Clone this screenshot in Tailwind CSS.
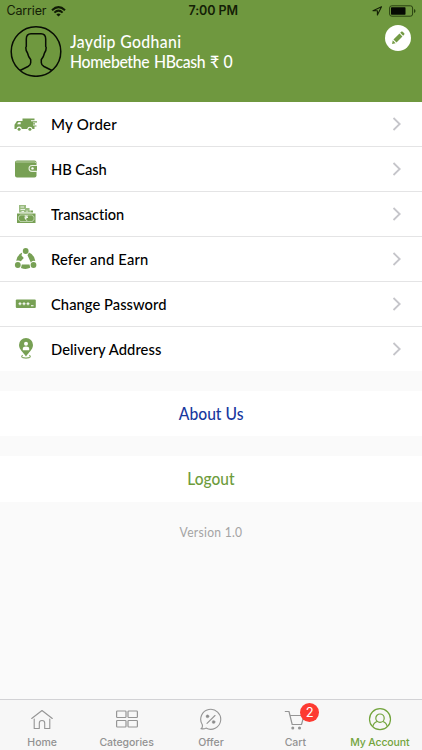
<!DOCTYPE html>
<html lang="en">
<head>
<meta charset="utf-8">
<title>My Account</title>
<script src="https://cdn.jsdelivr.net/npm/@tailwindcss/browser@4"></script>
</head>
<body class="w-[422px] h-[750px] overflow-hidden bg-[#fafafa] font-['Lato',sans-serif] flex flex-col">
<header class="h-[102px] shrink-0 bg-[#6f983f] flex flex-col">
  <div class="h-[22px] grid grid-cols-3 items-center pl-[6.5px] pr-[6px] font-['Inter',sans-serif] text-[12.5px] text-[#142006]">
    <div class="flex items-center gap-[5px]"><span class="tracking-[-0.15px]">Carrier</span>
      <svg width="15" height="11" viewBox="0 0 15 11" fill="none" stroke="#101b05" stroke-width="2"><path d="M1 4.200Q7.500-2 14 4.200M3.400 6.600Q7.500 2.700 11.600 6.600"/><path d="M5.300 8.400Q7.500 6.400 9.700 8.400L7.500 10.600Z" fill="#101b05" stroke="none"/></svg>
    </div>
    <div class="text-center font-semibold tracking-[-0.05px] pl-[4px]">7:00 PM</div>
    <div class="flex items-center justify-end gap-[6px]">
      <svg width="11" height="10" viewBox="0 0 11 10" fill="none" stroke="#142006" stroke-width="1.100" stroke-linejoin="round"><path d="M9.500 .8L1 4.700H5.400V9Z"/></svg>
      <svg width="27" height="12" viewBox="0 0 27 12"><rect x=".6" y=".8" width="23" height="10.400" rx="2.200" fill="none" stroke="#294010"/><rect x="2" y="2.300" width="14.500" height="7.400" rx=".6" fill="#050903"/><path d="M25 4v4q1.500-.6 1.500-2T25 4z" fill="#294010"/></svg>
    </div>
  </div>
  <div class="flex items-start pl-[10px] pr-[11px]">
    <svg class="mt-[3px]" width="52" height="52" viewBox="0 0 52 52" fill="none" stroke="#080d04" stroke-width="1.500" stroke-linejoin="round"><circle cx="26" cy="26.500" r="24.800"/><path d="M10 45.500L18 41.500Q20.700 40 20.700 37.800V34.600Q18.500 32.500 17.500 28Q15.700 25.500 15.800 22.500L16.300 21.500V14Q16.300 8.700 21 8.700H31Q35.700 8.700 35.700 14V21.500L36.200 22.500Q36.300 25.500 34.500 28Q33.500 32.500 31.300 34.600V37.800Q31.300 40 34 41.500L42 45.500"/></svg>
    <div class="ml-[7.5px] mt-[10px] flex-1 text-white text-[17px] leading-[20px] font-medium whitespace-nowrap">
      <div class="origin-left scale-x-[.93] tracking-[0.38px]">Jaydip Godhani</div>
      <div class="origin-left scale-x-[.93] tracking-[-0.38px] [word-spacing:1.2px]">Homebethe HBcash ₹ 0</div>
    </div>
    <div class="mt-[3px] size-[26px] rounded-full bg-white flex items-center justify-center">
      <svg width="14" height="14" viewBox="0 0 16 16" fill="#739b45"><path d="M1.200 14.800L2 10.700L5.300 14ZM2.800 9.700L9.700 2.900L13.100 6.300L6.300 13.200ZM10.500 2.100L12 .7Q12.700 .2 13.400 .9L15.100 2.600Q15.700 3.300 15.200 4L13.900 5.500Z"/></svg>
    </div>
  </div>
</header>

<main class="flex-1 min-h-0">
  <nav class="h-[269px] bg-white grid grid-rows-[45px_45px_45px_45px_45px_44px] divide-y divide-[#e4e4e5] text-[16px] font-medium text-black">
    <a class="flex items-center pl-[13px] pr-[19px]"><span class="w-[26px] mr-[12px]"><svg width="26" height="26" viewBox="0 0 26 26" fill="#77a054"><path d="M9.500 7.500H21.500V9.300H18V10.200H24V11.400H20V12.300H22V13.500H20V14.400H23.500V15.500H21.500V18H19.500A2.700 2.700 0 0 0 14.200 18H8.700A2.600 2.600 0 0 0 3.500 18H1.500V13.800L4 10H9.500Z"/><path d="M4 13.300L5.500 11.300H7.700V13.300Z" fill="#fff"/><circle cx="6.100" cy="18.300" r="1.500"/><circle cx="16.900" cy="18.300" r="1.500"/></svg></span><span class="flex-1 origin-left scale-x-[.94] tracking-[0.25px]">My Order</span><svg width="12" height="16" viewBox="0 0 12 16" fill="none" stroke="#c5c5ca" stroke-width="1.800"><path d="M2.500 2L8.700 8L2.500 14"/></svg></a>
    <a class="flex items-center pl-[13px] pr-[19px]"><span class="w-[26px] mr-[12px]"><svg width="26" height="26" viewBox="0 0 26 26" fill="#77a054"><rect x="2" y="4.500" width="21.500" height="17" rx="2"/><path d="M3 6H22.500V7" stroke="#c8dab8" stroke-width=".8" fill="none"/><path d="M24 9.500H19A2.900 2.900 0 0 0 19 15.400H24" stroke="#e7f0df" stroke-width="1.100"/><circle cx="19.500" cy="12.400" r="1.200" fill="#fff"/></svg></span><span class="flex-1 origin-left scale-x-[.92] tracking-[-0.1px]">HB Cash</span><svg width="12" height="16" viewBox="0 0 12 16" fill="none" stroke="#c5c5ca" stroke-width="1.800"><path d="M2.500 2L8.700 8L2.500 14"/></svg></a>
    <a class="flex items-center pl-[13px] pr-[19px]"><span class="w-[26px] mr-[12px]"><svg width="26" height="26" viewBox="0 0 26 26" fill="#77a054"><path d="M4 12.500H22.500V22H4Z"/><path d="M6 4H13V7H16.500V9.500H17.500V11.500H6Z" fill="#9abb80"/><path d="M7.500 6H11M7.500 8.500H12M14 9.500V11M8.500 10.500H11" stroke="#e9f1e3"/><path d="M17.500 9.500H20V11.500H17.500Z"/><path d="M7 14H19.500Q19.500 15.500 21 15.500V19Q19.500 19 19.500 20.500H7Q7 19 5.500 19V15.500Q7 15.500 7 14Z" fill="none" stroke="#c9dcba" stroke-width=".8"/><path d="M11.500 15H15M11.500 16.500H15M12 15Q14.500 15 14 16.500T12 17.500L14 19.800" fill="none" stroke="#fff" stroke-width=".8"/></svg></span><span class="flex-1 origin-left scale-x-[.91] tracking-[-0.05px]">Transaction</span><svg width="12" height="16" viewBox="0 0 12 16" fill="none" stroke="#c5c5ca" stroke-width="1.800"><path d="M2.500 2L8.700 8L2.500 14"/></svg></a>
    <a class="flex items-center pl-[13px] pr-[19px]"><span class="w-[26px] mr-[12px]"><svg width="26" height="26" viewBox="0 0 26 26" fill="#77a054"><circle cx="12.700" cy="5" r="2.900"/><circle cx="4.800" cy="19" r="2.900"/><circle cx="20.500" cy="19" r="2.900"/><path d="M9.200 6.500L8.500 9.500L10.800 12L7.800 15.200Q5.500 14 3.200 14.800Q3.700 9.500 9.200 6.500ZM16 6.500Q21.500 9 22.300 15Q19 14.300 17.800 16.400L14.500 9.300ZM8.800 18.500H16.500L17.200 21.800Q13 24 8 22Z"/></svg></span><span class="flex-1 origin-left scale-x-[.92] tracking-[0.18px]">Refer and Earn</span><svg width="12" height="16" viewBox="0 0 12 16" fill="none" stroke="#c5c5ca" stroke-width="1.800"><path d="M2.500 2L8.700 8L2.500 14"/></svg></a>
    <a class="flex items-center pl-[13px] pr-[19px]"><span class="w-[26px] mr-[12px]"><svg width="26" height="26" viewBox="0 0 26 26" fill="#77a054"><rect x="2.800" y="8.500" width="20" height="8.500" rx="1"/><path d="M5.500 12.700H8.500M7 11.200V14.200M9.500 12.700H12.500M11 11.200V14.200M13.500 12.700H16.500M15 11.200V14.200M18 14.700H20.500" stroke="#fff" stroke-width="1.100"/></svg></span><span class="flex-1 origin-left scale-x-[.92] tracking-[0.05px]">Change Password</span><svg width="12" height="16" viewBox="0 0 12 16" fill="none" stroke="#c5c5ca" stroke-width="1.800"><path d="M2.500 2L8.700 8L2.500 14"/></svg></a>
    <a class="flex items-center pl-[13px] pr-[19px]"><span class="w-[26px] mr-[12px]"><svg width="26" height="26" viewBox="0 0 26 26" fill="#77a054"><path d="M13 2A7 7 0 0 1 20 9C20 13.500 15.500 16.500 13 20.500C10.500 16.500 6 13.500 6 9A7 7 0 0 1 13 2Z"/><circle cx="13" cy="7.800" r="2" fill="#fff"/><path d="M9.800 14.300V12.700Q9.800 10.500 13 10.500T16.200 12.700V14.300Z" fill="#fff"/><path d="M9.700 19.300Q7.500 21 10 21.700Q13 22.500 16 21.700Q18.500 21 16.300 19.300" fill="none" stroke="#8aad6b" stroke-width="1.200"/></svg></span><span class="flex-1 origin-left scale-x-[.92] tracking-[0.08px]">Delivery Address</span><svg width="12" height="16" viewBox="0 0 12 16" fill="none" stroke="#c5c5ca" stroke-width="1.800"><path d="M2.500 2L8.700 8L2.500 14"/></svg></a>
  </nav>
  <button class="mt-[20px] h-[45px] w-full bg-white flex items-center justify-center text-[17px] font-medium text-[#17389e]"><span class="scale-x-[.92]">About Us</span></button>
  <button class="mt-[20px] h-[46px] w-full bg-white flex items-center justify-center text-[17px] font-medium text-[#6d9c3c]"><span class="scale-x-[.91]">Logout</span></button>
  <p class="mt-[20px] text-center text-[13px] leading-[20px] tracking-[0.3px] text-[#a4a4a4] scale-x-[.93]">Version 1.0</p>
</main>

<footer class="h-[51px] shrink-0 border-t border-[#d2d2d5] bg-[#f7f7f7] grid grid-cols-5 font-['Inter',sans-serif] text-[10.5px] leading-[12px] font-medium text-[#929292] text-center">
  <a class="flex flex-col items-center pt-[7px] gap-[4px]"><svg width="24" height="26" viewBox="0 0 24 26" fill="none" stroke="#959595" stroke-width="1.100" stroke-linejoin="round" stroke-linecap="round"><path d="M1.700 11.500L12 3.500L22.300 11.500M4.200 12V21.500H9.300V16Q9.300 13.500 12 13.500T14.700 16V21.500H19.800V12"/></svg><span>Home</span></a>
  <a class="flex flex-col items-center pt-[7px] gap-[4px]"><svg width="24" height="26" viewBox="0 0 24 26" fill="none" stroke="#959595" stroke-width="1.200"><rect x="1.600" y="4" width="9.400" height="6.500" rx=".8"/><rect x="13" y="4" width="9.400" height="6.500" rx=".8"/><rect x="1.600" y="13.500" width="9.400" height="6.500" rx=".8"/><rect x="13" y="13.500" width="9.400" height="6.500" rx=".8"/></svg><span class="tracking-[-0.05px]">Categories</span></a>
  <a class="flex flex-col items-center pt-[7px] gap-[4px]"><svg width="24" height="26" viewBox="0 0 24 26" fill="none" stroke="#959595" stroke-width="1.100" stroke-linecap="round"><path d="M3.200 17.500A10 10 0 1 1 7 21.100Q5 22.300 2.200 21.700Q4 20 3.200 17.500ZM8 16.300L16 8.500"/><circle cx="8.500" cy="9.300" r="1.500" fill="#8b8b8b" stroke-width=".4"/><circle cx="14.600" cy="14.900" r="1.500" fill="#8b8b8b" stroke-width=".4"/></svg><span>Offer</span></a>
  <a class="relative flex flex-col items-center pt-[7px] gap-[4px]"><svg width="24" height="26" viewBox="0 0 24 26" fill="none" stroke="#959595" stroke-width="1.200" stroke-linecap="round" stroke-linejoin="round"><path d="M2.300 4.500H6L9.200 17.500H18.500L21 8.500H7.200"/><circle cx="9.800" cy="21" r=".9" fill="#8b8b8b"/><circle cx="16.500" cy="21" r=".9" fill="#8b8b8b"/></svg><span>Cart</span><span class="absolute left-[47px] top-[3px] size-[19px] rounded-full bg-[#fd3a31] text-white text-[13px] leading-[19px] font-normal">2</span></a>
  <a class="flex flex-col items-center pt-[7px] gap-[4px] text-[#72a43c]"><svg width="24" height="26" viewBox="0 0 24 26" fill="none" stroke="#72a43c" stroke-width="1.200"><circle cx="12" cy="12.200" r="10.500"/><circle cx="12" cy="11.200" r="4.200"/><path d="M4.700 19.800Q5.500 15.700 9.200 14.500M14.800 14.500Q18.500 15.700 19.300 19.800"/></svg><span class="tracking-[-0.15px] whitespace-nowrap">My Account</span></a>
</footer>
</body>
</html>
